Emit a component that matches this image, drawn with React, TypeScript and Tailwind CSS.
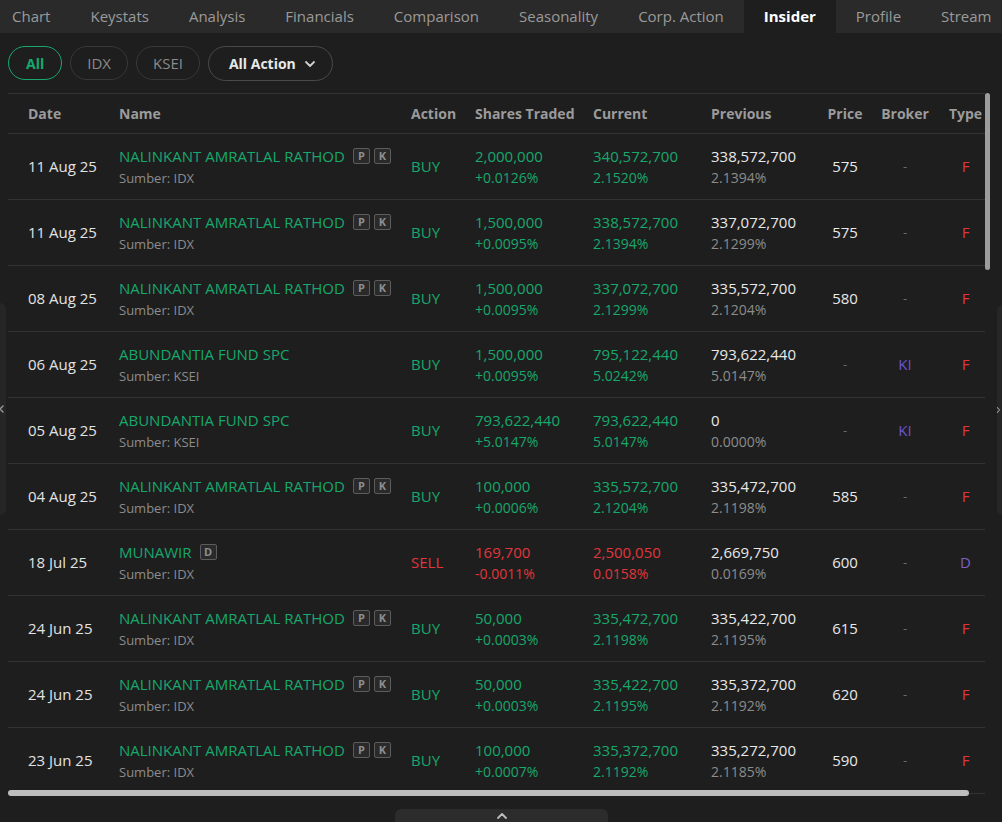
import React from "react";

type Row = {
  date: string;
  name: string;
  tags: string[];
  src: string;
  action: "BUY" | "SELL";
  shares: string;
  sharesPct: string;
  cur: string;
  curPct: string;
  prev: string;
  prevPct: string;
  price: string;
  broker: string;
  type: "F" | "D";
};

const NR = "NALINKANT AMRATLAL RATHOD";
const AB = "ABUNDANTIA FUND SPC";

const rows: Row[] = [
  { date: "11 Aug 25", name: NR, tags: ["P", "K"], src: "IDX", action: "BUY", shares: "2,000,000", sharesPct: "+0.0126%", cur: "340,572,700", curPct: "2.1520%", prev: "338,572,700", prevPct: "2.1394%", price: "575", broker: "-", type: "F" },
  { date: "11 Aug 25", name: NR, tags: ["P", "K"], src: "IDX", action: "BUY", shares: "1,500,000", sharesPct: "+0.0095%", cur: "338,572,700", curPct: "2.1394%", prev: "337,072,700", prevPct: "2.1299%", price: "575", broker: "-", type: "F" },
  { date: "08 Aug 25", name: NR, tags: ["P", "K"], src: "IDX", action: "BUY", shares: "1,500,000", sharesPct: "+0.0095%", cur: "337,072,700", curPct: "2.1299%", prev: "335,572,700", prevPct: "2.1204%", price: "580", broker: "-", type: "F" },
  { date: "06 Aug 25", name: AB, tags: [], src: "KSEI", action: "BUY", shares: "1,500,000", sharesPct: "+0.0095%", cur: "795,122,440", curPct: "5.0242%", prev: "793,622,440", prevPct: "5.0147%", price: "-", broker: "KI", type: "F" },
  { date: "05 Aug 25", name: AB, tags: [], src: "KSEI", action: "BUY", shares: "793,622,440", sharesPct: "+5.0147%", cur: "793,622,440", curPct: "5.0147%", prev: "0", prevPct: "0.0000%", price: "-", broker: "KI", type: "F" },
  { date: "04 Aug 25", name: NR, tags: ["P", "K"], src: "IDX", action: "BUY", shares: "100,000", sharesPct: "+0.0006%", cur: "335,572,700", curPct: "2.1204%", prev: "335,472,700", prevPct: "2.1198%", price: "585", broker: "-", type: "F" },
  { date: "18 Jul 25", name: "MUNAWIR", tags: ["D"], src: "IDX", action: "SELL", shares: "169,700", sharesPct: "-0.0011%", cur: "2,500,050", curPct: "0.0158%", prev: "2,669,750", prevPct: "0.0169%", price: "600", broker: "-", type: "D" },
  { date: "24 Jun 25", name: NR, tags: ["P", "K"], src: "IDX", action: "BUY", shares: "50,000", sharesPct: "+0.0003%", cur: "335,472,700", curPct: "2.1198%", prev: "335,422,700", prevPct: "2.1195%", price: "615", broker: "-", type: "F" },
  { date: "24 Jun 25", name: NR, tags: ["P", "K"], src: "IDX", action: "BUY", shares: "50,000", sharesPct: "+0.0003%", cur: "335,422,700", curPct: "2.1195%", prev: "335,372,700", prevPct: "2.1192%", price: "620", broker: "-", type: "F" },
  { date: "23 Jun 25", name: NR, tags: ["P", "K"], src: "IDX", action: "BUY", shares: "100,000", sharesPct: "+0.0007%", cur: "335,372,700", curPct: "2.1192%", prev: "335,272,700", prevPct: "2.1185%", price: "590", broker: "-", type: "F" },
];

const tabs = ["Chart", "Keystats", "Analysis", "Financials", "Comparison", "Seasonality", "Corp. Action", "Insider", "Profile", "Stream"];

const cols = "grid grid-cols-[101px_292px_64px_118px_118px_109px_70px_50px_71px]";

function Chevron({ dir, className }: { dir: "down" | "up" | "left" | "right"; className?: string }) {
  const d = {
    down: "M2 4 L6 8 L10 4",
    up: "M2 8 L6 4 L10 8",
    left: "M8 2 L4 6 L8 10",
    right: "M4 2 L8 6 L4 10",
  }[dir];
  return (
    <svg viewBox="0 0 12 12" className={className} fill="none" stroke="currentColor" strokeWidth="1.8" strokeLinecap="round" strokeLinejoin="round">
      <path d={d} />
    </svg>
  );
}

export default function App() {
  return (
    <div className="relative h-[822px] w-[1002px] overflow-hidden bg-[#1e1e1e] font-['Open_Sans',sans-serif]">
      {/* Tabs */}
      <div className="flex h-[33px] overflow-hidden bg-[#2a2a2a]">
        <div className="-ml-2 flex shrink-0">
          {tabs.map((t) => (
            <div
              key={t}
              className={`flex h-[33px] shrink-0 items-center whitespace-nowrap px-5 text-[15px] ${
                t === "Insider" ? "bg-[#1e1e1e] font-bold text-white" : "text-[#9a9a9a]"
              }`}
            >
              {t}
            </div>
          ))}
        </div>
      </div>

      {/* Filters */}
      <div className="flex gap-2 px-2 pt-[13px]">
        <button className="h-[34px] rounded-full border border-[#17a86d] px-[17px] text-[14px] font-bold text-[#17a86d]">All</button>
        <button className="h-[34px] rounded-full border border-[#383838] px-4 text-[15px] text-[#8a8a8a]">IDX</button>
        <button className="h-[34px] rounded-full border border-[#383838] px-4 text-[15px] text-[#8a8a8a]">KSEI</button>
        <button className="flex h-[35px] items-center gap-2 rounded-full border border-[#4a4a4a] pl-5 pr-4 text-[14px] font-bold text-[#e8e8e8]">
          All Action
          <Chevron dir="down" className="h-3 w-3 text-[#cfcfcf]" />
        </button>
      </div>

      {/* Table */}
      <div className="ml-2 mt-3 h-[704px] w-[977px] overflow-hidden">
        <div className="w-[993px]">
          <div className={`${cols} h-[41px] items-center border-y border-[#333] text-[14px] font-bold text-[#9b9b9b]`}>
            <div className="pl-5">Date</div>
            <div className="pl-[10px]">Name</div>
            <div className="pl-[10px]">Action</div>
            <div className="pl-[10px]">Shares Traded</div>
            <div className="pl-[10px]">Current</div>
            <div className="pl-[10px]">Previous</div>
            <div className="text-center">Price</div>
            <div className="text-center">Broker</div>
            <div className="text-center">Type</div>
          </div>
          {rows.map((r, i) => {
            const sell = r.action === "SELL";
            const clr = sell ? "text-[#e0363b]" : "text-[#17a86d]";
            return (
              <div key={i} className={`${cols} h-[66px] items-center border-b border-[#333] text-[15px]`}>
                <div className="pl-5 text-[#e2e2e2]">{r.date}</div>
                <div className="pl-[10px] leading-[22px]">
                  <div className="flex items-center">
                    <span className="text-[#17a86d]">{r.name}</span>
                    {r.tags.map((t, j) => (
                      <span
                        key={t}
                        className={`${j === 0 ? "ml-2" : "ml-[4px]"} flex h-[16px] w-[17px] items-center justify-center rounded-[2px] border border-[#5c5c5c] bg-[#2a2a2a] text-[11px] font-bold leading-none text-[#8e8e8e]`}
                      >
                        {t}
                      </span>
                    ))}
                  </div>
                  <div className="text-[13px] text-[#8c8c8c]">Sumber: {r.src}</div>
                </div>
                <div className={`pl-[10px] ${clr}`}>{r.action}</div>
                <div className={`pl-[10px] leading-[22px] ${clr}`}>
                  <div>{r.shares}</div>
                  <div className="text-[14px]">{r.sharesPct}</div>
                </div>
                <div className={`pl-[10px] leading-[22px] ${clr}`}>
                  <div>{r.cur}</div>
                  <div className="text-[14px]">{r.curPct}</div>
                </div>
                <div className="pl-[10px] leading-[22px]">
                  <div className="text-[#e8e8e8]">{r.prev}</div>
                  <div className="text-[14px] text-[#8c8c8c]">{r.prevPct}</div>
                </div>
                <div className={`text-center ${r.price === "-" ? "text-[13px] text-[#6a6a6a]" : "text-[#e8e8e8]"}`}>{r.price}</div>
                <div className={`text-center ${r.broker === "-" ? "text-[13px] text-[#6a6a6a]" : "text-[#6b54d3]"}`}>{r.broker}</div>
                <div className={`text-center ${r.type === "D" ? "text-[#7d5fc4]" : "text-[#e0363b]"}`}>{r.type}</div>
              </div>
            );
          })}
        </div>
      </div>

      {/* Scrollbars */}
      <div className="absolute left-[985px] top-[93px] h-[177px] w-[5px] rounded-full bg-[#9d9d9d]" />
      <div className="absolute left-[8px] top-[790px] h-[6px] w-[961px] rounded-full bg-[#bdbdbd]" />

      {/* Side handles */}
      <div className="absolute left-0 top-[303px] flex h-[212px] w-[6px] items-center rounded-r-md bg-[#262626]">
        <Chevron dir="left" className="-ml-[3px] h-[10px] w-[10px] text-[#9a9a9a]" />
      </div>
      <div className="absolute right-0 top-[305px] flex h-[210px] w-[5px] items-center rounded-l-md bg-[#262626]">
        <Chevron dir="right" className="-ml-[2px] h-[10px] w-[10px] text-[#9a9a9a]" />
      </div>

      {/* Bottom handle */}
      <div className="absolute left-[395px] top-[809px] flex h-[13px] w-[213px] justify-center rounded-t-md bg-[#2c2c2c]">
        <Chevron dir="up" className="mt-[1px] h-[12px] w-[14px] text-[#bdbdbd]" />
      </div>
    </div>
  );
}
